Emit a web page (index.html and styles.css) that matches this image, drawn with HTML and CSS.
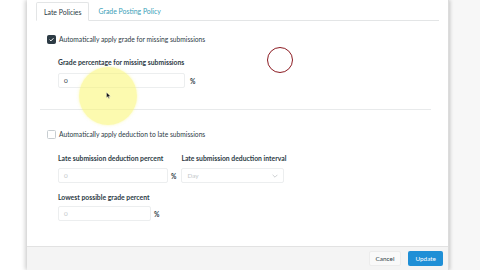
FILE: index.html
```html
<!DOCTYPE html>
<html>
<head>
<meta charset="utf-8">
<link rel="stylesheet" href="styles.css">
</head>
<body>
<div class="page">
  <div class="gutter"></div>
  <div class="modal">
    <div class="content">
      <div class="tabs">
        <div class="tab active">Late Policies</div>
        <div class="tab link">Grade Posting Policy</div>
      </div>
      <div class="check-row first">
        <span class="box checked"><svg viewBox="0 0 10 10" width="9" height="9"><path d="M2.3 5.2 L4.2 7 L7.8 3.2" fill="none" stroke="#fff" stroke-width="1.4"/></svg></span>
        <span class="check-text">Automatically apply grade for missing submissions</span>
      </div>
      <div class="field f1">
        <div class="label">Grade percentage for missing submissions</div>
        <div class="input-row">
          <div class="input w126"><span class="val">0</span></div>
          <span class="pct">%</span>
        </div>
      </div>
      <div class="divider"></div>
      <div class="check-row second">
        <span class="box"></span>
        <span class="check-text">Automatically apply deduction to late submissions</span>
      </div>
      <div class="pair">
        <div class="field">
          <div class="label">Late submission deduction percent</div>
          <div class="input-row">
            <div class="input w109"><span class="ph">0</span></div>
            <span class="pct small">%</span>
          </div>
        </div>
        <div class="field">
          <div class="label">Late submission deduction interval</div>
          <div class="input select w102"><span class="ph">Day</span><svg class="chev" viewBox="0 0 10 6" width="6" height="4"><path d="M1 1 L5 5 L9 1" fill="none" stroke="#b9bec2" stroke-width="1.2"/></svg></div>
        </div>
      </div>
      <div class="field f3">
        <div class="label">Lowest possible grade percent</div>
        <div class="input-row">
          <div class="input w92"><span class="ph">0</span></div>
          <span class="pct small">%</span>
        </div>
      </div>
    </div>
    <div class="footer">
      <div class="btn cancel">Cancel</div>
      <div class="btn update">Update</div>
    </div>
  </div>
  <div class="side"></div>
</div>
<div class="highlight"></div>
<div class="ring"></div>
<svg class="cursor" viewBox="0 0 6 9" width="5" height="7"><path d="M0.5 0.5 L0.5 7.5 L2.2 5.8 L3.4 8.5 L4.3 8.1 L3.2 5.4 L5.5 5.4 Z" fill="#111" stroke="#fff" stroke-width="0.4"/></svg>
</body>
</html>
```
FILE: styles.css
```css
html, body {
  margin: 0;
  padding: 0;
  width: 480px;
  height: 270px;
  overflow: hidden;
  font-family: Lato, "Open Sans", sans-serif;
  color: #2d3b45;
  background: #fff;
}
.page {
  display: flex;
  width: 480px;
  height: 270px;
}
.gutter {
  width: 27px;
  flex: none;
  background: #fff;
}
.side {
  flex: 1;
  background: #f7f7f7;
}
.modal {
  width: 422px;
  flex: none;
  height: 270px;
  display: flex;
  flex-direction: column;
  background: #fff;
  box-shadow: -2px 0 4px rgba(0,0,0,0.18), 2px 0 3px rgba(0,0,0,0.12);
  border-right: 1px solid #dcdcdc;
  box-sizing: border-box;
  position: relative;
  z-index: 1;
}
.content {
  flex: 1;
  padding: 2px 9px 0 9px;
}
.tabs {
  display: flex;
  height: 18px;
  border-bottom: 1px solid #e3e5e6;
}
.tab {
  font-size: 6.9px;
  line-height: 18px;
  height: 18px;
  box-sizing: border-box;
}
.tab.active {
  padding: 0 7px;
  border: 1px solid #e3e5e6;
  border-bottom: 1px solid #fff;
  line-height: 18px;
  height: 19px;
  border-radius: 2px 2px 0 0;
  background: #fff;
}
.tab.link {
  padding: 0 9px;
  color: #3aa0b8;
  line-height: 19px;
}
.check-row {
  display: flex;
  align-items: center;
  padding-left: 11px;
  height: 10px;
}
.check-row.first { margin-top: 13px; }
.check-row.second { margin-top: 19px; }
.box {
  width: 9px;
  height: 9px;
  box-sizing: border-box;
  border: 1px solid #c7cdd1;
  border-radius: 1.5px;
  display: flex;
  align-items: center;
  justify-content: center;
  flex: none;
}
.box.checked {
  background: #2d3b45;
  border-color: #2d3b45;
}
.box svg { display: block; }
.check-text {
  font-size: 6.7px;
  margin-left: 3px;
  white-space: nowrap;
}
.field {
  padding-left: 22px;
}
.f1 { margin-top: 14px; }
.label {
  font-size: 6.8px;
  font-weight: bold;
  height: 9px;
  line-height: 9px;
  white-space: nowrap;
}
.input-row {
  display: flex;
  align-items: center;
  margin-top: 5px;
}
.f1 .input-row { margin-top: 6px; }
.input {
  height: 15px;
  box-sizing: border-box;
  border: 1px solid #eceeef;
  border-radius: 2px;
  font-size: 6.4px;
  display: flex;
  align-items: center;
  padding-left: 5px;
  background: #fff;
}
.w126 { width: 127px; }
.w109 { width: 110px; }
.w102 { width: 103px; }
.w92 { width: 93px; }
.val { color: #2d3b45; }
.ph { color: #c4c8cb; }
.pct {
  font-size: 6.6px;
  font-weight: bold;
  margin-left: 5px;
}
.pct.small { margin-left: 3px; }
.divider {
  height: 1px;
  background: #e8eaeb;
  margin: 21px 8px 0 4px;
}
.pair {
  display: flex;
  margin-top: 15px;
}
.pair .field + .field {
  padding-left: 5px;
}
.pair .field + .field .input {
  margin-top: 5px;
}
.select {
  justify-content: space-between;
  padding-right: 5px;
}
.chev { display: block; }
.f3 { margin-top: 10px; }
.f3 .input-row { margin-top: 4px; }
.footer {
  height: 23px;
  flex: none;
  background: #f4f4f4;
  border-top: 1px solid #e2e2e2;
  display: flex;
  justify-content: flex-end;
  align-items: center;
  padding-right: 5px;
  gap: 7px;
}
.btn {
  height: 15px;
  box-sizing: border-box;
  font-size: 6.4px;
  line-height: 15px;
  border-radius: 2px;
  padding: 0 6px;
}
.cancel {
  background: #f9f9f9;
  border: 1px solid #ececec;
  line-height: 13px;
  color: #2d3b45;
}
.update {
  background: #1f8fd6;
  color: #fff;
  padding: 0 7px;
}
.highlight {
  position: absolute;
  left: 79px;
  top: 67px;
  width: 58px;
  height: 58px;
  border-radius: 50%;
  background: rgba(250, 246, 110, 0.55);
  box-shadow: 0 0 3px rgba(250, 246, 110, 0.5);
  z-index: 5;
}
.ring {
  position: absolute;
  left: 267px;
  top: 47px;
  width: 24px;
  height: 24px;
  border-radius: 50%;
  border: 1.4px solid #8c1b22;
  z-index: 5;
}
.cursor {
  position: absolute;
  left: 106px;
  top: 92px;
  z-index: 6;
}
```
